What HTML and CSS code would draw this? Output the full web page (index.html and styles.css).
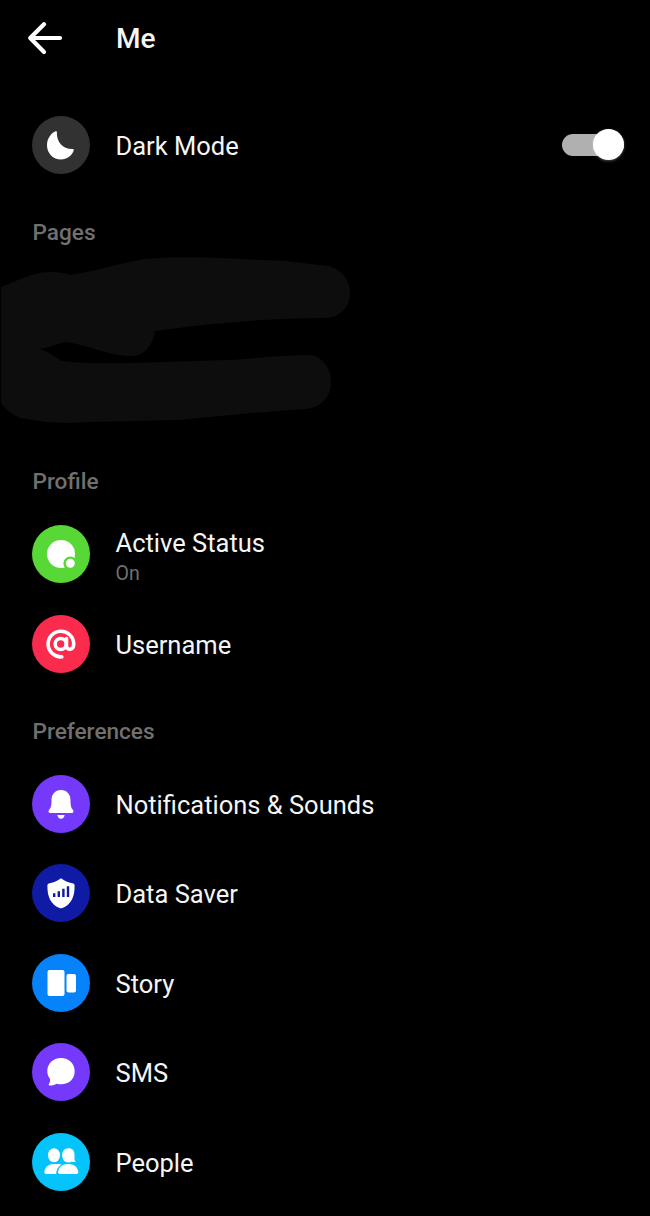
FILE: index.html
```html
<!DOCTYPE html>
<html lang="en">
<head>
  <meta charset="UTF-8">
  <meta name="viewport" content="width=device-width, initial-scale=1.0">
  <title>Me</title>
  <link rel="stylesheet" href="styles.css">
</head>
<body>
  <header class="top-bar">
    <svg class="back" viewBox="0 0 36 34" fill="none" stroke="#fff" stroke-width="4.2" stroke-linecap="round" stroke-linejoin="round">
      <path d="M17 3.200 L3.200 17 L17 31 M3.500 17 H33"/>
    </svg>
    <h1>Me</h1>
  </header>

  <main>
    <div class="row">
      <svg class="icon" viewBox="0 0 58 58">
        <circle cx="29" cy="29" r="29" fill="#323232"/>
        <path fill="#fff" d="M23.500 15.300C24.300 14.900 25 15.300 24.900 16.200C24.300 25.500 31 33.300 40.300 33.100C41.500 33 42.100 33.600 41.700 34.600C39.700 40 34.800 43.400 29 43.400C21.200 43.400 15 37.200 15 29.400C15 23.200 18.300 17.700 23.500 15.300Z"/>
      </svg>
      <span class="label">Dark Mode</span>
      <span class="switch"><span class="knob"></span></span>
    </div>

    <h2>Pages</h2>
    <svg class="pages" viewBox="0 0 650 179" fill="#0d0d0d">
      <path d="M1 27 C20 20 32 12 50 12 C59 12 64 13 70 15 C98 11 115 4 145 -1 C190 -5 232 -1 285 1 L328 6 C342 9 350 20 350 33 C350 47 340 58 324 58 C270 58 212 63 155 71 C153 85 144 96 132 96 C108 96 92 86 66 82 C56 84 48 88 40 89 C50 92 54 97 62 101 C100 106 180 101 232 100 C260 98 284 95 312 95 C323 98 331 108 331 122 C331 137 321 148 305 149 C260 152 220 156 180 160 C150 161 110 161 66 163 C48 163 34 160 20 158 C10 153 5 149 1 143 Z"/>
    </svg>

    <h2>Profile</h2>
    <div class="row">
      <svg class="icon" viewBox="0 0 58 58">
        <circle cx="29" cy="29" r="29" fill="#58d837"/>
        <circle cx="29" cy="29" r="14" fill="#fff"/>
        <circle cx="38.300" cy="38.300" r="5.700" fill="#fff" stroke="#58d837" stroke-width="2.400"/>
      </svg>
      <span class="label two-line">Active Status<small>On</small></span>
    </div>
    <div class="row">
      <svg class="icon" viewBox="0 0 58 58">
        <circle cx="29" cy="29" r="29" fill="#fb2b4e"/>
        <g fill="none" stroke="#fff" stroke-width="3.600" stroke-linecap="round">
          <circle cx="28.700" cy="29" r="5.500"/>
          <path d="M34.500 23.500V30.500C34.500 36 41.700 35.500 41.700 28.800A12.800 12.800 0 1 0 29.800 41.800"/>
        </g>
      </svg>
      <span class="label">Username</span>
    </div>

    <h2>Preferences</h2>
    <div class="row">
      <svg class="icon" viewBox="0 0 58 58">
        <circle cx="29" cy="29" r="29" fill="#7439fb"/>
        <path fill="#fff" d="M29 15C35 15 38.500 19.500 38.500 25C38.500 30.500 39 32.500 41 35C42 36.400 41.500 38 39.800 38H18.200C16.500 38 16 36.400 17 35C19 32.500 19.500 30.500 19.500 25C19.500 19.500 23 15 29 15Z"/>
        <path fill="#fff" d="M25.300 40H32.700C32.200 42.300 31 43.700 29 43.700S25.800 42.300 25.300 40Z"/>
      </svg>
      <span class="label">Notifications &amp; Sounds</span>
    </div>
    <div class="row">
      <svg class="icon" viewBox="0 0 58 58">
        <circle cx="29" cy="29" r="29" fill="#0f1aa5"/>
        <path fill="#fff" d="M29 14.300C33 17.300 37 18.800 41.300 19.500Q42.600 19.800 42.600 21.500C42.800 32 39.500 40.500 30.500 44Q29 44.700 27.500 44C18.500 40.500 15.200 32 15.400 21.500Q15.400 19.800 16.700 19.500C21 18.800 25 17.300 29 14.300Z"/>
        <path stroke="#0f1aa5" stroke-width="2.400" d="M22.200 29.200V33M26.800 27.200V33M31.400 24.800V33M36 22.300V33"/>
      </svg>
      <span class="label">Data Saver</span>
    </div>
    <div class="row">
      <svg class="icon" viewBox="0 0 58 58">
        <circle cx="29" cy="29" r="29" fill="#0683fb"/>
        <rect x="15.500" y="16" width="17" height="26" rx="2" fill="#fff"/>
        <rect x="34.500" y="20" width="9.500" height="18.500" rx="2" fill="#fff"/>
      </svg>
      <span class="label">Story</span>
    </div>
    <div class="row">
      <svg class="icon" viewBox="0 0 58 58">
        <circle cx="29" cy="29" r="29" fill="#7439fb"/>
        <path fill="#fff" d="M29 15C37 15 42.700 20.600 42.700 28.200C42.700 35.800 37 41.300 29 41.300C27.500 41.300 26 41.100 24.600 40.700C22.500 41.900 20 42.700 17.600 42.500C16.500 42.400 16.500 41.500 17 40.800C17.900 39.500 18.300 37.700 18.100 36C16.300 33.800 15.300 31.200 15.300 28.200C15.300 20.600 21 15 29 15Z"/>
      </svg>
      <span class="label">SMS</span>
    </div>
    <div class="row">
      <svg class="icon" viewBox="0 0 58 58">
        <circle cx="29" cy="29" r="29" fill="#05c3fb"/>
        <g fill="#fff">
          <ellipse cx="22" cy="22.300" rx="6" ry="7"/>
          <path d="M29.800 31.200C26.500 33.300 24.500 36 24.200 41H14.200Q12.300 41 12.300 39.200C12.700 34.500 16.500 31 22 31C25 31 27.500 31 29.800 31.200Z"/>
          <path d="M36.500 15.300C40.500 15.300 42.500 18 42.500 22V26.500Q42.700 28 44 28.300C42.500 29.300 41 29.200 40 28.400C39 29.100 37.800 29.400 36.500 29.400C32.500 29.400 30.200 26.300 30.200 22.200S32.500 15.300 36.500 15.300Z"/>
          <path d="M36.200 31C42 31 46 34.500 46.300 39.200Q46.300 41 44.500 41H27.900Q26.100 41 26.100 39.200C26.400 34.500 30.400 31 36.200 31Z"/>
        </g>
      </svg>
      <span class="label">People</span>
    </div>
  </main>
</body>
</html>
```

FILE: styles.css
```css
* {
  box-sizing: border-box;
}
body {
  margin: 0;
  background: #000;
  color: #f5f5f5;
  font-family: Roboto, sans-serif;
  overflow: hidden;
}
.top-bar {
  display: flex;
  align-items: center;
  gap: 53px;
  height: 100.2px;
  padding: 0 27px 24px;
}
.back {
  width: 36px;
  height: 34px;
}
h1 {
  margin: 1px 0 0;
  font-size: 28px;
  font-weight: 500;
}
h2 {
  height: 70.5px;
  margin: 0;
  padding: 15px 32.5px 0;
  font-size: 22.6px;
  font-weight: 500;
  line-height: 56px;
  color: #707070;
}
.row {
  display: flex;
  align-items: center;
  gap: 25.5px;
  height: 89.5px;
  padding: 0 26px 0 32px;
}
.icon {
  flex: none;
  width: 58px;
  height: 58px;
}
.label {
  flex: 1;
  padding-top: 2px;
  font-size: 25.5px;
  line-height: 30px;
}
.two-line {
  padding-top: 8px;
}
.two-line small {
  display: block;
  font-size: 19.5px;
  line-height: 31px;
  color: #707070;
}
.pages {
  display: block;
  width: 650px;
  height: 179px;
  overflow: visible;
}
.switch {
  display: flex;
  align-items: center;
  justify-content: flex-end;
  width: 62px;
  height: 22px;
  border-radius: 11px;
  background: #b0b0b0;
}
.knob {
  flex: none;
  width: 31px;
  height: 31px;
  border-radius: 50%;
  background: #fff;
  box-shadow: 0 1px 3px rgba(255, 255, 255, 0.3);
}
```
